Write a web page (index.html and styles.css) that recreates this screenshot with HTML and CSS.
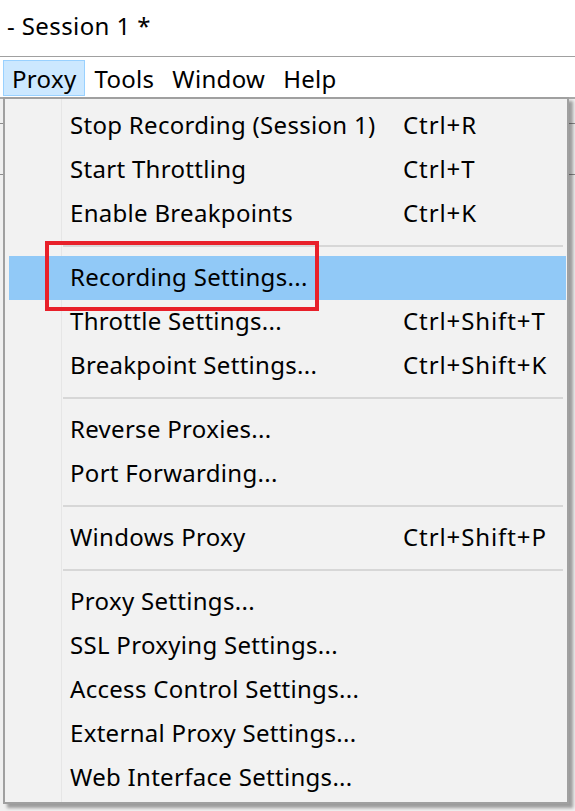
FILE: index.html
```html
<!DOCTYPE html>
<html lang="en">
    <head>
        <meta charset="UTF-8">
        <title>Proxy menu</title>
        <link rel="stylesheet" href="styles.css">
    </head>
    <body>
        <div class="title">- Session 1 *</div>
        <nav class="menubar">
            <span class="menu-title open">Proxy</span>
            <span class="menu-title">Tools</span>
            <span class="menu-title">Window</span>
            <span class="menu-title">Help</span>
        </nav>
        <div class="workspace">
            <div class="strip"></div>
            <div class="strip"></div>
        </div>

        <div class="dropdown">
            <div class="item"><span>Stop Recording (Session 1)</span><span class="key">Ctrl+R</span></div>
            <div class="item"><span>Start Throttling</span><span class="key">Ctrl+T</span></div>
            <div class="item"><span>Enable Breakpoints</span><span class="key">Ctrl+K</span></div>
            <div class="sep"></div>
            <div class="item active"><span>Recording Settings...</span><span></span></div>
            <div class="item"><span>Throttle Settings...</span><span class="key">Ctrl+Shift+T</span></div>
            <div class="item"><span>Breakpoint Settings...</span><span class="key">Ctrl+Shift+K</span></div>
            <div class="sep"></div>
            <div class="item"><span>Reverse Proxies...</span><span></span></div>
            <div class="item"><span>Port Forwarding...</span><span></span></div>
            <div class="sep"></div>
            <div class="item"><span>Windows Proxy</span><span class="key">Ctrl+Shift+P</span></div>
            <div class="sep"></div>
            <div class="item"><span>Proxy Settings...</span><span></span></div>
            <div class="item"><span>SSL Proxying Settings...</span><span></span></div>
            <div class="item"><span>Access Control Settings...</span><span></span></div>
            <div class="item"><span>External Proxy Settings...</span><span></span></div>
            <div class="item"><span>Web Interface Settings...</span><span></span></div>
        </div>

        <!-- red annotation box -->
        <div class="mark"></div>
    </body>
</html>
```

FILE: styles.css
```css
body {
    font-family: 'Noto Sans', 'Open Sans', sans-serif;
    font-size: 24px;
    letter-spacing: 0.3px;
    color: #000;
    background-color: #fff;
    margin: 0;
    padding: 0;
    height: 811px;
    overflow: hidden;
}

.title {
    height: 56px;
    line-height: 52px;
    padding-left: 7px;
    font-size: 24px;
    letter-spacing: 0.4px;
    border-bottom: 1px solid #a0a0a0;
}

.menubar {
    display: flex;
    align-items: stretch;
    padding-left: 3px;
    padding-top: 3px;
    padding-bottom: 1px;
    border-bottom: 2px solid #a9a9a9;
    box-sizing: border-box;
    height: 42px;
}

.menu-title {
    display: flex;
    align-items: center;
    padding: 0 8px 0 8px;
    border: 1px solid transparent;
}

.menu-title.open {
    background-color: #cce8ff;
    border-color: #99d1ff;
}

.workspace {
    background-color: #f0f0f0;
    height: 714px;
    padding-top: 24px;
}

.strip {
    height: 1px;
    background-color: #8c8c8c;
    margin-bottom: 50px;
}

.dropdown {
    position: absolute;
    left: 3px;
    top: 97px;
    width: 562px;
    background-color: #f2f2f2;
    border: 2px solid #a0a0a0;
    padding: 5px 0 2px 0;
    box-shadow: 4px 4px 3px rgba(0, 0, 0, 0.35);
    background-image: linear-gradient(#e6e6e6, #e6e6e6);
    background-size: 1px 100%;
    background-position: 56px 0;
    background-repeat: no-repeat;
}

.item {
    display: grid;
    grid-template-columns: 333px 1fr;
    height: 44px;
    line-height: 42px;
    align-items: start;
    padding-left: 61px;
    margin-left: 4px;
    margin-right: 1px;
}

.item span {
    white-space: nowrap;
}

.item .key {
    letter-spacing: 0.9px;
}

.item.active {
    background-color: #91c9f7;
}

.sep {
    height: 20px;
    margin-left: 58px;
    margin-right: 4px;
    background-image: linear-gradient(#d7d7d7, #d7d7d7);
    background-size: 100% 2px;
    background-position: 0 9px;
    background-repeat: no-repeat;
}

.mark {
    position: absolute;
    left: 45px;
    top: 241px;
    width: 266px;
    height: 62px;
    border: 4px solid #e8202a;
}
```
